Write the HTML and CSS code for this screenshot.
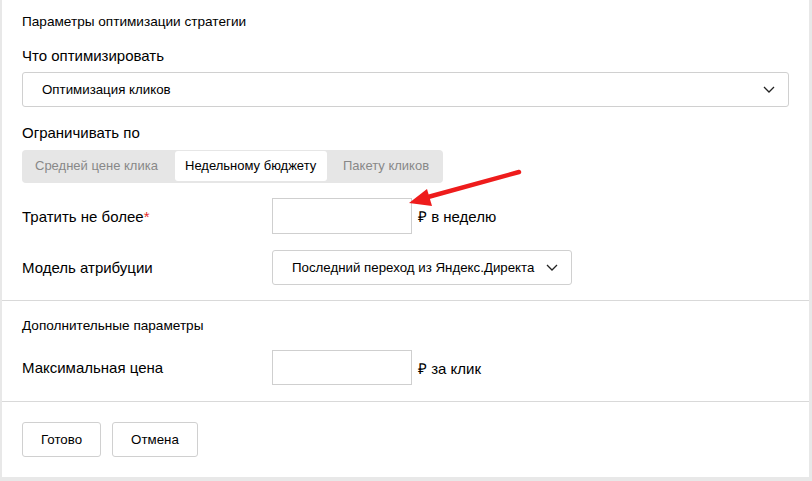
FILE: index.html
```html
<!DOCTYPE html>
<html lang="ru">
<head>
<meta charset="UTF-8">
<title>Параметры стратегии</title>
<link rel="stylesheet" href="styles.css">
</head>
<body>
<div class="card">
    <div class="section first">
        <div class="title">Параметры оптимизации стратегии</div>
        <div class="label">Что оптимизировать</div>
        <div class="select wide">
            <span>Оптимизация кликов</span>
            <svg class="chevron" width="12" height="7" viewBox="0 0 12 7"><path d="M1 1l5 5 5-5" fill="none" stroke="#222" stroke-width="1.3"/></svg>
        </div>
        <div class="label second">Ограничивать по</div>
        <div class="tabs">
            <div class="tab">Средней цене клика</div>
            <div class="tab active">Недельному бюджету</div>
            <div class="tab last">Пакету кликов</div>
        </div>
        <div class="row">
            <div class="row-label">Тратить не более<span class="req">*</span></div>
            <div class="input"></div>
            <div class="unit">₽ в неделю</div>
        </div>
        <div class="row">
            <div class="row-label">Модель атрибуции</div>
            <div class="select small">
                <span>Последний переход из Яндекс.Директа</span>
                <svg class="chevron" width="12" height="7" viewBox="0 0 12 7"><path d="M1 1l5 5 5-5" fill="none" stroke="#222" stroke-width="1.3"/></svg>
            </div>
        </div>
    </div>
    <div class="section extra">
        <div class="title">Дополнительные параметры</div>
        <div class="row">
            <div class="row-label">Максимальная цена</div>
            <div class="input"></div>
            <div class="unit">₽ за клик</div>
        </div>
    </div>
    <div class="section buttons">
        <button class="btn">Готово</button>
        <button class="btn">Отмена</button>
    </div>
    <svg class="arrow" width="812" height="481" viewBox="0 0 812 481">
        <line x1="519" y1="172" x2="428" y2="197" stroke="#ee1c1c" stroke-width="4.5" stroke-linecap="round"/>
        <polygon points="409,203 427,189 432,206" fill="#ee1c1c"/>
    </svg>
</div>
</body>
</html>
```

FILE: styles.css
```css
body {
    margin: 0;
    background-color: #e8e8e8;
    font-family: "Liberation Sans", Arial, sans-serif;
    color: #000;
}
.card {
    position: relative;
    background-color: #fff;
    margin-left: 2px;
    width: 807px;
    height: 477px;
}
.section {
    padding: 13px 20px 15px;
    border-bottom: 1px solid #d9d9d9;
}
.title {
    font-size: 13.6px;
    line-height: 18px;
}
.label {
    font-size: 15px;
    line-height: 20px;
    margin-top: 15px;
}
.label.second {
    margin-top: 16px;
}
.select {
    display: flex;
    align-items: center;
    justify-content: space-between;
    box-sizing: border-box;
    border: 1px solid #d0d0d0;
    border-radius: 3px;
    font-size: 13.3px;
    padding: 0 13px 0 19px;
}
.select.wide {
    margin-top: 6px;
    height: 35px;
    width: 767px;
}
.select.small {
    height: 35px;
    width: 300px;
}
.tabs {
    display: inline-flex;
    margin-top: 7px;
    padding: 1px 1px 2px;
    background-color: #e6e6e6;
    border-radius: 4px;
}
.tab {
    box-sizing: border-box;
    width: 152px;
    height: 30px;
    line-height: 30px;
    padding-left: 12px;
    font-size: 13px;
    color: #888;
    border-radius: 3px;
}
.tab.active {
    background-color: #fff;
    color: #000;
    padding-left: 10px;
}
.tab.last {
    width: 115px;
    padding-left: 16px;
}
.row {
    display: flex;
    align-items: center;
    margin-top: 15px;
}
.row + .row {
    margin-top: 16px;
}
.row-label {
    width: 250px;
    font-size: 15px;
}
.req {
    color: #e52b2b;
}
.input {
    box-sizing: border-box;
    width: 140px;
    height: 36px;
    border: 1px solid #cfcfcf;
}
.unit {
    margin-left: 6px;
    font-size: 15px;
}
.extra {
    padding-top: 16px;
    padding-bottom: 16px;
}
.extra .input {
    height: 35px;
}
.buttons {
    border-bottom: none;
    padding-top: 20px;
    display: flex;
    gap: 11px;
}
.btn {
    box-sizing: border-box;
    height: 35px;
    padding: 0 18px;
    border: 1px solid #d0d0d0;
    border-radius: 3px;
    background-color: #fff;
    font-family: "Liberation Sans", Arial, sans-serif;
    font-size: 13.3px;
    color: #000;
}
.arrow {
    position: absolute;
    left: -2px;
    top: 0;
    pointer-events: none;
}
```
